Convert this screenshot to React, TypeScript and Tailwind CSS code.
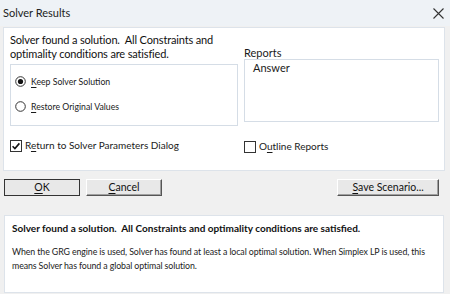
import React from "react";

const ui = { fontFamily: 'Lato, "Liberation Sans", sans-serif' };

const Key = ({ children }: { children: React.ReactNode }) => (
  <span className="underline underline-offset-2">{children}</span>
);

const Radio = ({ checked }: { checked?: boolean }) => (
  <svg width="11" height="11" viewBox="0 0 11 11" className="shrink-0">
    <circle cx="5.5" cy="5.5" r="4.8" fill="white" stroke="#333" strokeWidth="1" />
    {checked && <circle cx="5.5" cy="5.5" r="2.6" fill="#111" />}
  </svg>
);

const Check = ({ checked }: { checked?: boolean }) => (
  <svg width="12" height="12" viewBox="0 0 12 12" className="shrink-0">
    <rect x="0.5" y="0.5" width="11" height="11" fill="white" stroke="#333" />
    {checked && <path d="M2.6 6.2 L4.9 8.5 L9.4 3.4" fill="none" stroke="#111" strokeWidth="1.6" />}
  </svg>
);

const Button = ({ children, main, className }: { children: React.ReactNode; main?: boolean; className?: string }) => (
  <div
    className={`h-[17px] flex items-center justify-center bg-[#e8e8e8] text-[10.5px] text-[#111] ${
      main ? "border-[1.5px] border-[#333]" : "border border-t-white border-l-white border-r-[#555] border-b-[#555] shadow-[inset_-1px_-1px_0_#a0a0a0]"
    } ${className ?? ""}`}
  >
    {children}
  </div>
);

export default function App() {
  return (
    <div className="w-[450px] h-[294px] bg-[#f0f0f0] flex flex-col text-[#1a1a1a] overflow-hidden" style={ui}>
      <div className="h-[26px] bg-[#eef2f6] flex items-center justify-between pl-[3px] pr-[6px] shrink-0">
        <span className="text-[11px] text-[#222]">Solver Results</span>
        <svg width="11" height="11" viewBox="0 0 11 11">
          <path d="M0.5 0.5 L10.5 10.5 M10.5 0.5 L0.5 10.5" stroke="#333" strokeWidth="1.1" />
        </svg>
      </div>

      <div className="ml-[3px] w-[442px] h-[144px] mt-[1px] bg-white border border-[#dde3ea] flex pl-[6px] pr-[5px] shrink-0">
        <div className="w-[228px] flex flex-col">
          <div className="text-[11px] leading-[14px] mt-[5px] text-[#111] whitespace-nowrap tracking-[-0.15px]">
            Solver found a solution.&nbsp; All Constraints and
            <br />
            optimality conditions are satisfied.
          </div>
          <div className="h-[62px] mt-[3px] border border-[#d5dde6] flex flex-col gap-[14px] pt-[11px] pl-[4px] text-[8.7px]">
            <div className="flex items-center gap-[5px] h-[11px]">
              <Radio checked />
              <span><Key>K</Key>eep Solver Solution</span>
            </div>
            <div className="flex items-center gap-[5px] h-[11px]">
              <Radio />
              <span><Key>R</Key>estore Original Values</span>
            </div>
          </div>
          <div className="flex items-center gap-[3px] mt-[12px] text-[10px]">
            <Check checked />
            <span>R<Key>e</Key>turn to Solver Parameters Dialog</span>
          </div>
        </div>
        <div className="ml-[6px] flex-1 flex flex-col">
          <div className="text-[11px] leading-[13px] mt-[18px]">
            Re<Key>p</Key>orts
          </div>
          <div className="h-[63px] border border-[#d5dde6] pl-[8px] text-[11px] leading-[13px] pt-[1px]">Answer</div>
          <div className="flex items-center gap-[3px] mt-[17px] text-[10px]">
            <Check />
            <span>O<Key>u</Key>tline Reports</span>
          </div>
        </div>
      </div>

      <div className="flex items-center mt-[8px] pl-[4px] pr-[11px] shrink-0">
        <Button main className="w-[76px]">
          <Key>O</Key>K
        </Button>
        <Button className="w-[76px] ml-[6px]">
          <Key>C</Key>ancel
        </Button>
        <Button className="w-[102px] ml-auto">
          <Key>S</Key>ave Scenario...
        </Button>
      </div>

      <div className="ml-[4px] w-[440px] h-[78px] mt-[19px] bg-white border border-[#dde3ea] pl-[7px] pr-[4px] pt-[5px] shrink-0">
        <div className="text-[10px] font-bold leading-[15px] text-[#111] whitespace-nowrap">
          Solver found a solution.&nbsp; All Constraints and optimality conditions are satisfied.
        </div>
        <div className="text-[8.8px] leading-[14px] mt-[9px] text-[#222] tracking-[-0.1px]">
          When the GRG engine is used, Solver has found at least a local optimal solution. When Simplex LP is used, this means Solver has found a global optimal solution.
        </div>
      </div>
    </div>
  );
}
